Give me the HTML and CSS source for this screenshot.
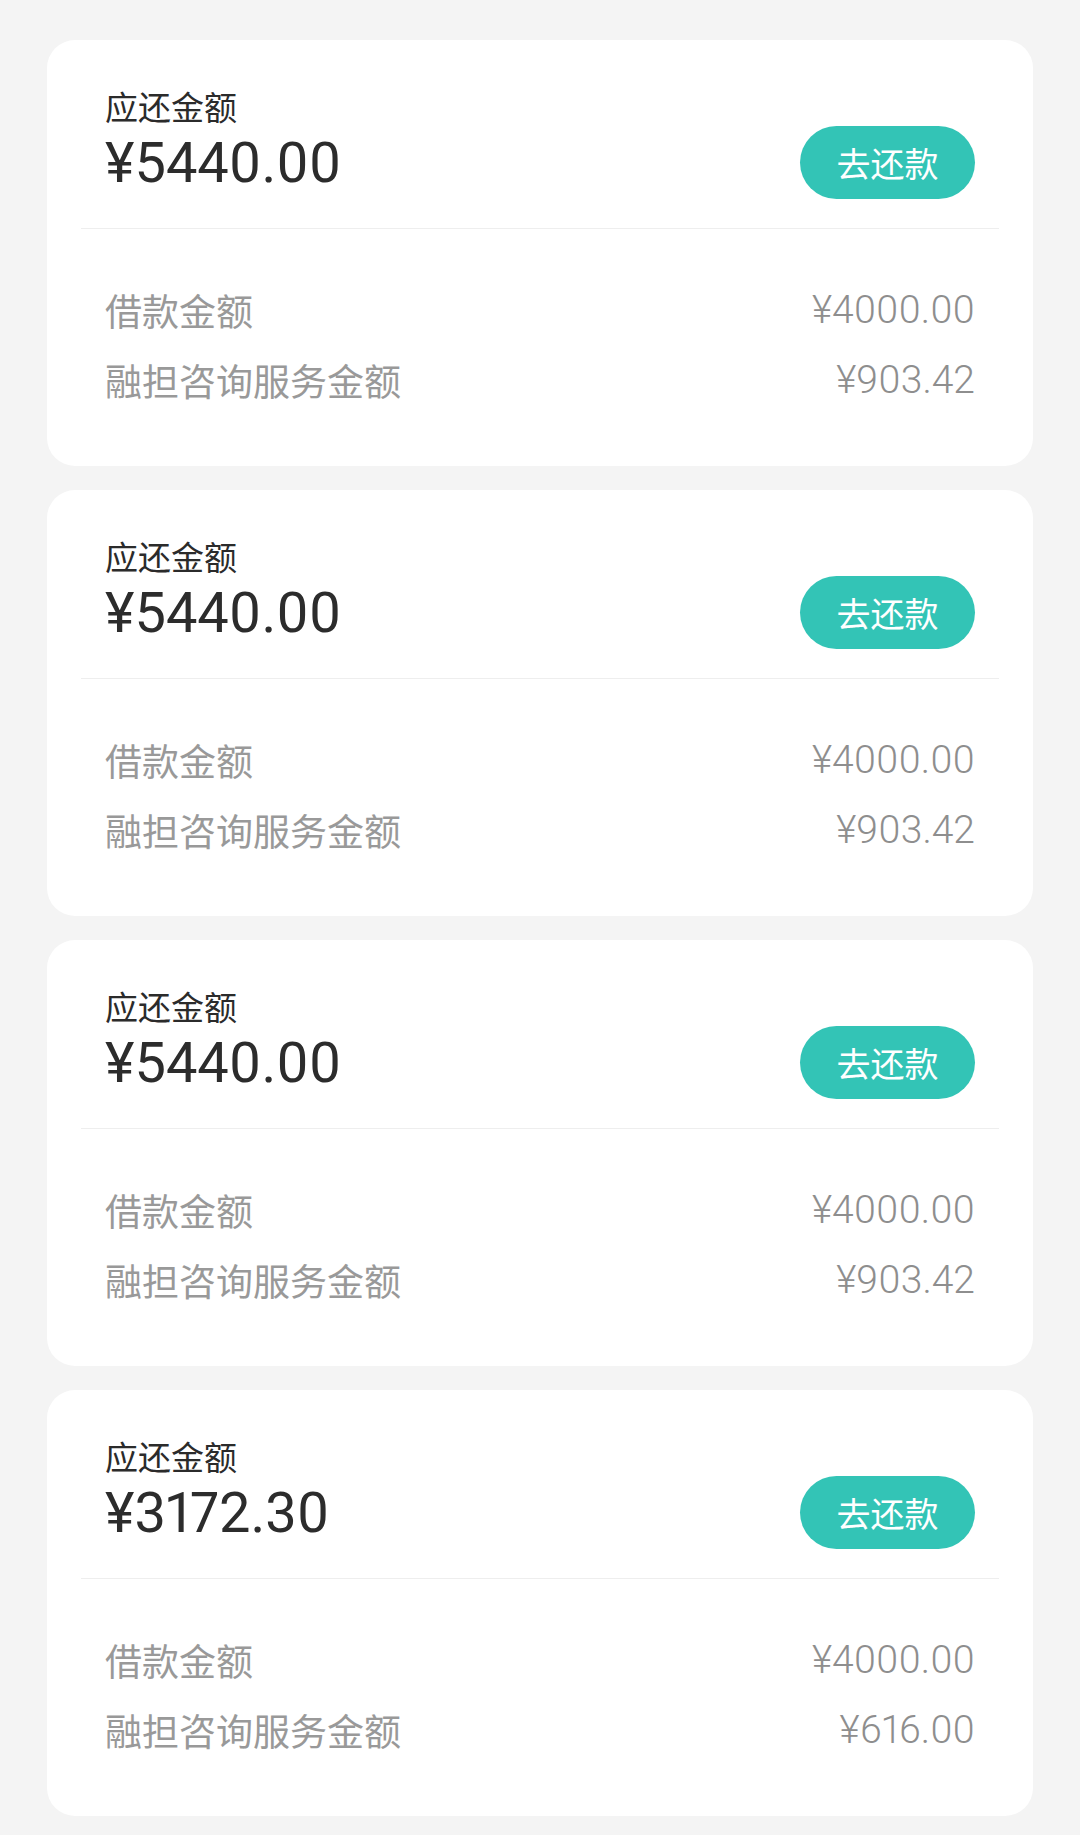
FILE: index.html
```html
<!DOCTYPE html>
<html lang="zh-CN">
<head>
    <meta charset="UTF-8">
    <meta name="viewport" content="width=device-width, initial-scale=1.0">
    <title>还款列表</title>
    <link rel="stylesheet" href="styles.css">
</head>
<body>

<div class="list">
    <div class="card">
        <div class="card-top">
            <div class="label">应还金额</div>
            <div class="amount-row">
                <div class="amount">¥5440.00</div>
                <button class="pay-btn">去还款</button>
            </div>
        </div>
        <div class="divider"></div>
        <div class="card-bottom">
            <div class="row"><span>借款金额</span><span class="num">¥4000.00</span></div>
            <div class="row"><span>融担咨询服务金额</span><span class="num">¥903.42</span></div>
        </div>
    </div>

    <div class="card">
        <div class="card-top">
            <div class="label">应还金额</div>
            <div class="amount-row">
                <div class="amount">¥5440.00</div>
                <button class="pay-btn">去还款</button>
            </div>
        </div>
        <div class="divider"></div>
        <div class="card-bottom">
            <div class="row"><span>借款金额</span><span class="num">¥4000.00</span></div>
            <div class="row"><span>融担咨询服务金额</span><span class="num">¥903.42</span></div>
        </div>
    </div>

    <div class="card">
        <div class="card-top">
            <div class="label">应还金额</div>
            <div class="amount-row">
                <div class="amount">¥5440.00</div>
                <button class="pay-btn">去还款</button>
            </div>
        </div>
        <div class="divider"></div>
        <div class="card-bottom">
            <div class="row"><span>借款金额</span><span class="num">¥4000.00</span></div>
            <div class="row"><span>融担咨询服务金额</span><span class="num">¥903.42</span></div>
        </div>
    </div>

    <div class="card">
        <div class="card-top">
            <div class="label">应还金额</div>
            <div class="amount-row">
                <div class="amount">¥3172.30</div>
                <button class="pay-btn">去还款</button>
            </div>
        </div>
        <div class="divider"></div>
        <div class="card-bottom">
            <div class="row"><span>借款金额</span><span class="num">¥4000.00</span></div>
            <div class="row"><span>融担咨询服务金额</span><span class="num">¥616.00</span></div>
        </div>
    </div>
</div>

</body>
</html>
```

FILE: styles.css
```css
body {
    font-family: Roboto, "Noto Sans CJK SC", sans-serif;
    background-color: #f4f4f4;
    margin: 0;
    padding: 0;
}
.list {
    display: flex;
    flex-direction: column;
    gap: 24px;
    padding: 40px 47px 20px 47px;
}
.card {
    background-color: #fff;
    border-radius: 28px;
    padding: 0 34px;
}
.card-top {
    padding: 46px 24px 29px 24px;
}
.label {
    font-family: "Noto Sans CJK SC", sans-serif;
    font-size: 33px;
    line-height: 40px;
    color: #2b2b2b;
}
.amount-row {
    display: flex;
    align-items: center;
    justify-content: space-between;
    height: 73px;
}
.amount {
    font-size: 56px;
    line-height: 66px;
    color: #2c2c2c;
    font-variant-numeric: proportional-nums;
}
.pay-btn {
    width: 175px;
    height: 73px;
    border: none;
    border-radius: 37px;
    background-color: #33c4b6;
    color: #fff;
    font-family: "Noto Sans CJK SC", sans-serif;
    font-size: 34px;
    padding: 0;
}
.divider {
    height: 1px;
    background-color: #eeeeee;
}
.card-bottom {
    padding: 46px 24px 51px 24px;
}
.row {
    display: flex;
    justify-content: space-between;
    align-items: center;
    height: 70px;
    font-family: "Noto Sans CJK SC", sans-serif;
    font-size: 37px;
    color: #999;
}
.row .num {
    font-family: Roboto, sans-serif;
    font-size: 39px;
    font-weight: 300;
    color: #8e8e8e;
    font-variant-numeric: proportional-nums;
}
```
